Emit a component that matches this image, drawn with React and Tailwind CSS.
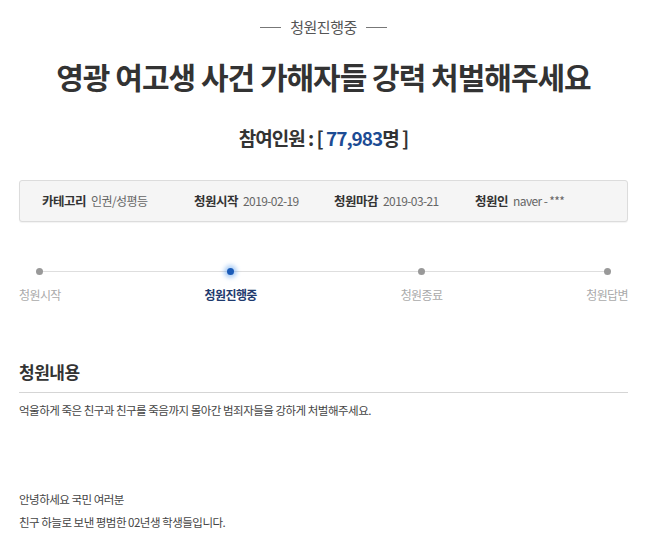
const info = [
  { label: "카테고리", value: "인권/성평등", w: "w-[152px]" },
  { label: "청원시작", value: "2019-02-19", w: "w-[140px]" },
  { label: "청원마감", value: "2019-03-21", w: "w-[141px]" },
  { label: "청원인", value: "naver - ***", w: "" },
];

const steps = [
  { name: "청원시작" },
  { name: "청원진행중", active: true },
  { name: "청원종료" },
  { name: "청원답변" },
];

export default function App() {
  return (
    <div className="min-h-[543px] bg-white px-[19px] text-[#333] font-['Noto_Sans_CJK_KR','Noto_Sans',sans-serif]">
      {/* status */}
      <div className="flex items-center justify-center gap-[9px] pt-[17px] text-[15px] leading-[20px] text-[#555] tracking-[-0.5px]">
        <span className="h-px w-[21px] bg-[#777]" />
        <span>청원진행중</span>
        <span className="h-px w-[21px] bg-[#777]" />
      </div>

      <h1 className="mt-[21px] text-center text-[30px] font-bold leading-[36px] tracking-[-1px] text-[#333]">
        영광 여고생 사건 가해자들 강력 처벌해주세요
      </h1>

      <div className="mt-[31px] text-center text-[19px] font-bold leading-[26px] tracking-[-1px] text-[#333]">
        참여인원 : [ <span className="text-[#1d4c94]">77,983</span>명 ]
      </div>

      {/* info box */}
      <div className="mt-[29px] flex h-[42px] items-center rounded-[3px] border border-[#dcdcdc] bg-[#f5f5f5] pl-[22px] shadow-[0_1px_1px_rgba(0,0,0,0.05)]">
        {info.map((it) => (
          <div key={it.label} className={`flex items-center gap-[5px] ${it.w}`}>
            <span className="text-[12.5px] font-bold tracking-[-0.5px] text-[#333]">{it.label}</span>
            <span className="text-[12px] tracking-[-0.6px] text-[#666]">{it.value}</span>
          </div>
        ))}
      </div>

      {/* progress */}
      <div className="relative mt-[45px] flex justify-between">
        <div className="absolute left-[20px] right-[21px] top-[4px] h-px bg-[#dedede]" />
        {steps.map((s) => (
          <div key={s.name} className="relative flex flex-col items-center">
            {s.active ? (
              <span className="mt-[1px] h-[7px] w-[7px] rounded-full bg-[#1a5bb8] shadow-[0_0_4px_3px_rgba(80,150,235,0.45)]" />
            ) : (
              <span className="mt-[1px] h-[7px] w-[7px] rounded-full bg-[#999]" />
            )}
            <span
              className={`mt-[12px] text-[12px] leading-[16px] tracking-[-0.6px] ${
                s.active ? "font-bold text-[#1e3a6e]" : "text-[#aaa]"
              }`}
            >
              {s.name}
            </span>
          </div>
        ))}
      </div>

      {/* content */}
      <h2 className="mt-[57px] text-[17px] font-bold leading-[24px] tracking-[-0.5px] text-[#333]">청원내용</h2>
      <div className="mt-[8px] h-px bg-[#d5d5d5]" />
      <p className="mt-[8px] text-[11.5px] leading-[18px] tracking-[-0.5px] text-[#444]">
        억울하게 죽은 친구과 친구를 죽음까지 몰아간 범죄자들을 강하게 처벌해주세요.
      </p>
      <p className="mt-[69px] text-[11.5px] leading-[23px] tracking-[-0.5px] text-[#444]">
        안녕하세요 국민 여러분
        <br />
        친구 하늘로 보낸 평범한 02년생 학생들입니다.
      </p>
    </div>
  );
}
